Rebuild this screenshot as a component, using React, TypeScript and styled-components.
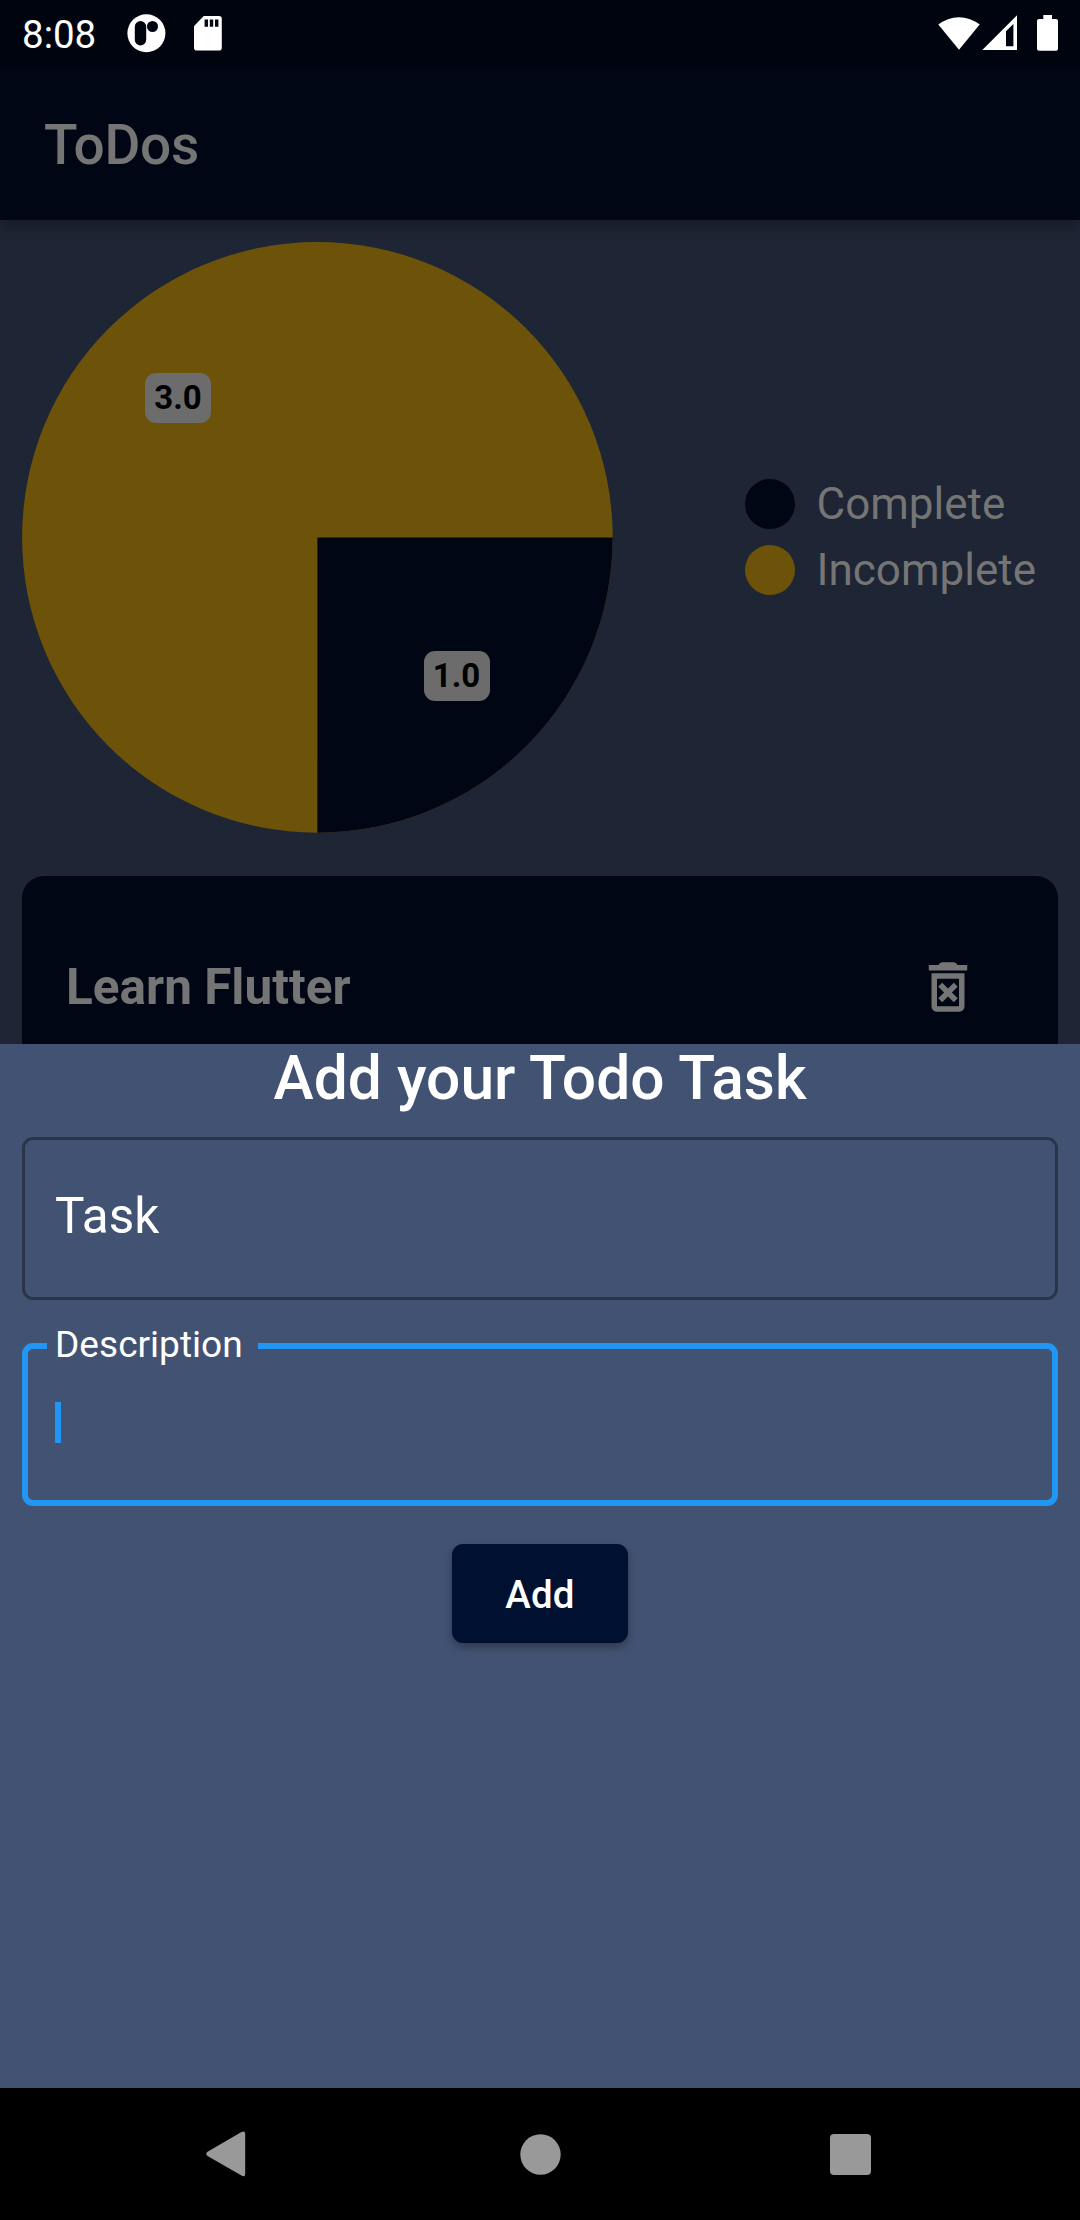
import React from "react";
import styled, { createGlobalStyle } from "styled-components";

const c = {
  navyDim: "#000614",
  statusBar: "#00040f",
  backDim: "#1e2534",
  amberDim: "#6d530a",
  textDim: "#757575",
  sheet: "#425272",
  navy: "#001030",
  outline: "#29364a",
  focus: "#2196f3",
};

const GlobalStyle = createGlobalStyle`
  * { box-sizing: border-box; }
  html, body { margin: 0; padding: 0; background: #000; }
  body { font-family: Roboto, "Liberation Sans", sans-serif; }
`;

const Screen = styled.div`
  width: 1080px;
  height: 2220px;
  display: flex;
  flex-direction: column;
  overflow: hidden;
  background: #000;
`;

const Backdrop = styled.main`
  height: 1044px;
  flex: none;
  display: flex;
  flex-direction: column;
  overflow: hidden;
  background: ${c.backDim};
`;

const StatusBar = styled.header`
  height: 66px;
  flex: none;
  display: flex;
  align-items: center;
  justify-content: space-between;
  padding: 0 22px;
  background: ${c.statusBar};
  z-index: 2;
`;

const StatusGroup = styled.div<{ $gap: number }>`
  display: flex;
  align-items: center;
  height: 66px;
  gap: ${(p) => p.$gap}px;
`;

const Clock = styled.span`
  width: 76px;
  font-size: 38.5px;
  line-height: 66px;
  color: #fff;
  padding-top: 4px;
  margin-right: 1px;
`;

const Glyph = styled.svg`
  display: block;
  flex: none;
`;

const AppBar = styled.div`
  height: 154px;
  flex: none;
  display: flex;
  align-items: center;
  padding: 4px 44px 0;
  background: ${c.navyDim};
  box-shadow: 0 6px 12px rgba(0, 0, 0, 0.28);
  z-index: 1;
`;

const AppTitle = styled.h1`
  margin: 0;
  font-size: 55px;
  font-weight: 500;
  line-height: 64px;
  letter-spacing: -0.3px;
  color: ${c.textDim};
`;

const ChartRow = styled.section`
  flex: none;
  display: flex;
  align-items: center;
  justify-content: space-between;
  padding: 22px 44px 44px 22px;
`;

const Pie = styled.div`
  position: relative;
  width: 591px;
  height: 590px;
`;

const SliceLabel = styled.span<{ $x: number; $y: number }>`
  position: absolute;
  left: ${(p) => p.$x}px;
  top: ${(p) => p.$y}px;
  width: 66px;
  height: 50px;
  border-radius: 11px;
  background: #6c6c6c;
  color: #000;
  font-size: 33px;
  font-weight: 700;
  line-height: 50px;
  text-align: center;
`;

const Legend = styled.ul`
  margin: 0;
  padding: 0;
  list-style: none;
`;

const LegendItem = styled.li`
  height: 66px;
  display: flex;
  align-items: center;
  gap: 22px;
  font-size: 44px;
  color: ${c.textDim};
`;

const Dot = styled.i<{ $color: string }>`
  width: 50px;
  height: 50px;
  border-radius: 50%;
  background: ${(p) => p.$color};
`;

const TodoCard = styled.article`
  flex: none;
  height: 260px;
  margin: 0 22px;
  padding: 78px 77px 0 44px;
  display: flex;
  align-items: flex-start;
  justify-content: space-between;
  border-radius: 22px;
  background: ${c.navyDim};
`;

const TodoName = styled.h2`
  margin: 0;
  font-size: 49.5px;
  font-weight: 700;
  line-height: 66px;
  color: ${c.textDim};
`;

const Sheet = styled.form`
  height: 1044px;
  flex: none;
  display: flex;
  flex-direction: column;
  align-items: center;
  padding: 0 22px;
  background: ${c.sheet};
`;

const SheetTitle = styled.h2`
  margin: 0;
  height: 93px;
  font-size: 60.5px;
  font-weight: 500;
  line-height: 69px;
  color: #fff;
`;

const Field = styled.fieldset<{ $focused?: boolean }>`
  width: 1036px;
  height: ${(p) => (p.$focused ? 175 : 163)}px;
  min-width: 0;
  margin: ${(p) => (p.$focused ? "31px 0 0" : "0")};
  padding: ${(p) => (p.$focused ? "41px 27px 0" : "0 30px")};
  border: ${(p) => (p.$focused ? `6px solid ${c.focus}` : `3px solid ${c.outline}`)};
  border-radius: 11px;
`;

const Placeholder = styled.span`
  display: block;
  font-size: 49.5px;
  line-height: 152px;
  color: #fff;
`;

const FieldLabel = styled.legend`
  width: 211px;
  height: 30px;
  margin-left: -8px;
  padding: 0 0 0 8px;
  font-size: 37.1px;
  line-height: 28px;
  color: #fff;
  white-space: nowrap;
`;

const Caret = styled.i`
  display: block;
  width: 6px;
  height: 41px;
  background: ${c.focus};
`;

const AddButton = styled.button`
  width: 176px;
  height: 99px;
  margin-top: 38px;
  padding: 2px 0 0;
  border: 0;
  border-radius: 11px;
  background: ${c.navy};
  color: #fff;
  font-family: inherit;
  font-size: 38.5px;
  font-weight: 500;
  line-height: 97px;
  letter-spacing: 0.2px;
  box-shadow: 0 4px 8px rgba(0, 0, 0, 0.3);
`;

const NavBar = styled.nav`
  height: 132px;
  flex: none;
  display: flex;
  align-items: center;
  justify-content: space-between;
  padding: 0 209px 0 206px;
`;

const slices = [
  { value: "3.0", x: 123, y: 131 },
  { value: "1.0", x: 401.5, y: 409 },
];

export default function App() {
  return (
    <>
      <GlobalStyle />
      <Screen>
        <Backdrop>
          <StatusBar>
            <StatusGroup $gap={28}>
              <Clock>8:08</Clock>
              <Glyph width="39" height="66" viewBox="127 0 39 66">
                <circle cx="146.4" cy="33.2" r="19" fill="#fff" />
                <rect x="134.8" y="21" width="11.4" height="24.4" rx="5.7" fill={c.statusBar} />
                <circle cx="152.5" cy="26.5" r="5.5" fill={c.statusBar} />
              </Glyph>
              <Glyph width="28" height="66" viewBox="193.4 0 28 66">
                <path
                  d="M203.4 16h15a2.8 2.8 0 0 1 2.8 2.8v29a2.8 2.8 0 0 1-2.8 2.8h-22.2a2.8 2.8 0 0 1-2.8-2.8V27q0-1 .8-1.8l8.2-8.4q.5-.8 1-.8z"
                  fill="#fff"
                />
                <path d="M204 19.4h3.4v7.4H204zM209.2 19.4h3.4v7.4h-3.4zM214.4 19.4h3.4v7.4h-3.4z" fill={c.statusBar} />
              </Glyph>
            </StatusGroup>
            <StatusGroup $gap={2}>
              <Glyph width="42" height="66" viewBox="937.5 0 42 66">
                <path d="M958.5 49.7 937.8 24.6a33 33 0 0 1 41.4 0z" fill="#fff" />
              </Glyph>
              <Glyph width="53" height="66" viewBox="982 0 53 66">
                <path d="M982.3 50 1017 15.2V50zM1006 31.2V46.2h7.4V24z" fill="#fff" fillRule="evenodd" />
              </Glyph>
              <Glyph width="21" height="66" viewBox="1037 0 21 66">
                <path d="M1043.3 15h8.7v4h4a2 2 0 0 1 2 2v27.7a2 2 0 0 1-2 2h-17a2 2 0 0 1-2-2V21a2 2 0 0 1 2-2h4.3z" fill="#fff" />
              </Glyph>
            </StatusGroup>
          </StatusBar>
          <AppBar>
            <AppTitle>ToDos</AppTitle>
          </AppBar>
          <ChartRow>
            <Pie>
              <Glyph width="591" height="591" viewBox="0 0 591 591">
                <circle cx="295.4" cy="295.4" r="295.3" fill={c.amberDim} />
                <path d="M295.4 295.4H590.7A295.3 295.3 0 0 1 295.4 590.7Z" fill={c.navyDim} />
              </Glyph>
              {slices.map((s) => (
                <SliceLabel key={s.value} $x={s.x} $y={s.y}>
                  {s.value}
                </SliceLabel>
              ))}
            </Pie>
            <Legend>
              <LegendItem>
                <Dot $color={c.navyDim} />
                Complete
              </LegendItem>
              <LegendItem>
                <Dot $color={c.amberDim} />
                Incomplete
              </LegendItem>
            </Legend>
          </ChartRow>
          <TodoCard>
            <TodoName>Learn Flutter</TodoName>
            <Glyph width="66" height="66" viewBox="0 0 24 24" fill={c.textDim}>
              <path d="M14.12 10.47 12 12.59l-2.13-2.12-1.41 1.41L10.59 14l-2.12 2.12 1.41 1.41L12 15.41l2.12 2.12 1.41-1.41L13.41 14l2.12-2.12zM15.5 4l-.7-.7q-.3-.3-.7-.3H9.9q-.4 0-.7.3L8.5 4H5v2h14V4zM6 19c0 1.1.9 2 2 2h8c1.1 0 2-.9 2-2V7H6zM8 9h8v10H8z" />
            </Glyph>
          </TodoCard>
        </Backdrop>
        <Sheet>
          <SheetTitle>Add your Todo Task</SheetTitle>
          <Field>
            <Placeholder>Task</Placeholder>
          </Field>
          <Field $focused>
            <FieldLabel>Description</FieldLabel>
            <Caret />
          </Field>
          <AddButton type="button">Add</AddButton>
        </Sheet>
        <NavBar>
          <Glyph width="44" height="46" viewBox="0 0 44 46">
            <path d="M35 1.2Q39.2-1 39.2 3.5V42.5Q39.2 47 35 44.3L1.5 25Q-1 23 1.5 20.8Z" fill="#999" />
          </Glyph>
          <Glyph width="41" height="41" viewBox="0 0 41 41">
            <circle cx="20.5" cy="20.5" r="20.2" fill="#999" />
          </Glyph>
          <Glyph width="41" height="41" viewBox="0 0 41 41">
            <rect width="41" height="41" rx="4" fill="#999" />
          </Glyph>
        </NavBar>
      </Screen>
    </>
  );
}
